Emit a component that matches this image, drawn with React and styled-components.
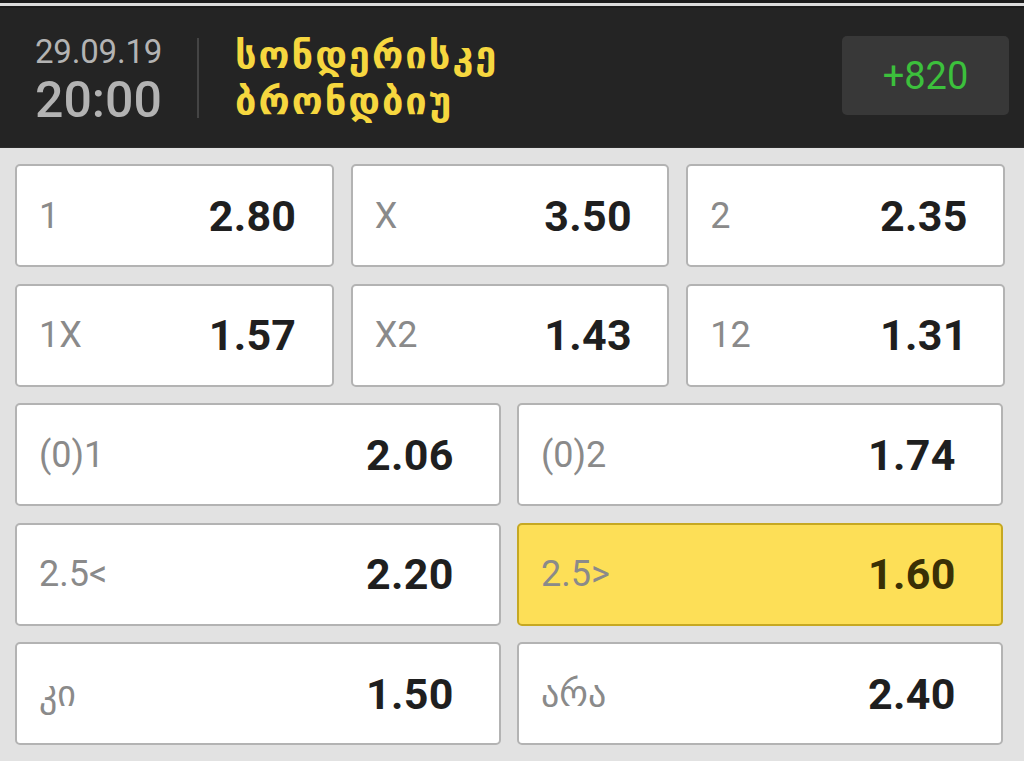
import React from 'react';
import styled, { createGlobalStyle } from 'styled-components';

const GlobalStyle = createGlobalStyle`
  html, body {
    margin: 0;
    padding: 0;
    background: #e2e2e2;
  }
  body {
    font-family: Roboto, "DejaVu Sans", sans-serif;
  }
`;

const Page = styled.div`
  width: 1024px;
  height: 761px;
  overflow: hidden;
  background: #e2e2e2;
`;

const TopEdge = styled.div`
  height: 8px;
  background: #1c1c1c;
  display: flex;
  flex-direction: column;
  justify-content: center;

  &::after {
    content: '';
    display: block;
    height: 3px;
    margin-top: 1px;
    background: #dcdcdc;
  }
`;

const Header = styled.header`
  height: 140px;
  background: #242424;
  display: flex;
  align-items: center;
  padding: 0 15px 0 35px;
  border-bottom: 1px solid #2c2c2c;
  box-sizing: border-box;
`;

const When = styled.div`
  display: flex;
  flex-direction: column;
  color: #b3b3b3;
  width: 162px;
  margin-top: 6px;
`;

const DateText = styled.div`
  font-size: 33px;
  line-height: 30px;
  letter-spacing: -0.2px;
`;

const TimeText = styled.div`
  font-size: 50px;
  line-height: 50px;
  margin-top: 8px;
  font-weight: 500;
`;

const Divider = styled.div`
  width: 2px;
  height: 80px;
  background: #444;
  margin: 0 36px 0 0;
`;

const Teams = styled.div`
  flex: 1;
  color: #f6d73f;
  font-family: "DejaVu Sans", sans-serif;
  font-weight: bold;
  font-size: 38px;
  line-height: 46px;
  letter-spacing: 2px;
`;

const Badge = styled.div`
  width: 167px;
  height: 79px;
  margin-top: -4px;
  border-radius: 5px;
  background: #383838;
  color: #3cc03c;
  font-size: 38px;
  display: flex;
  align-items: center;
  justify-content: center;
`;

const Board = styled.div`
  display: flex;
  flex-direction: column;
  gap: 16.5px;
  padding: 16px 19px 0 15px;
`;

const Row = styled.div`
  display: grid;
  grid-template-columns: repeat(${({ $cols }) => $cols}, 1fr);
  gap: ${({ $cols }) => ($cols === 3 ? 17 : 16)}px;
  padding-right: ${({ $cols }) => ($cols === 3 ? 0 : 2)}px;
`;

const Cell = styled.div`
  height: 103px;
  box-sizing: border-box;
  display: flex;
  align-items: center;
  padding-left: 22px;
  border-radius: 5px;
  border: 2px solid ${({ $active }) => ($active ? '#c6a822' : '#b3b3b3')};
  background: ${({ $active }) => ($active ? '#fddf57' : '#ffffff')};
`;

const Label = styled.span`
  flex: 1;
  color: #8a8a8a;
  font-size: 36px;
  font-family: Roboto, "DejaVu Sans", sans-serif;
`;

const Odd = styled.span`
  width: ${({ $wide }) => ($wide ? 133 : 123)}px;
  color: ${({ $active }) => ($active ? '#3a3005' : '#1f1f1f')};
  font-size: 43px;
  font-weight: 700;
  letter-spacing: 0.3px;
`;

const rows = [
  [
    ['1', '2.80'],
    ['X', '3.50'],
    ['2', '2.35'],
  ],
  [
    ['1X', '1.57'],
    ['X2', '1.43'],
    ['12', '1.31'],
  ],
  [
    ['(0)1', '2.06'],
    ['(0)2', '1.74'],
  ],
  [
    ['2.5<', '2.20'],
    ['2.5>', '1.60', true],
  ],
  [
    ['კი', '1.50'],
    ['არა', '2.40'],
  ],
];

export default function App() {
  return (
    <Page>
      <GlobalStyle />
      <TopEdge />
      <Header>
        <When>
          <DateText>29.09.19</DateText>
          <TimeText>20:00</TimeText>
        </When>
        <Divider />
        <Teams>
          <div>სონდერისკე</div>
          <div>ბრონდბიუ</div>
        </Teams>
        <Badge>+820</Badge>
      </Header>
      <Board>
        {rows.map((row, i) => (
          <Row key={i} $cols={row.length}>
            {row.map(([label, odd, active]) => (
              <Cell key={label} $active={active}>
                <Label>{label}</Label>
                <Odd $wide={row.length === 2} $active={active}>
                  {odd}
                </Odd>
              </Cell>
            ))}
          </Row>
        ))}
      </Board>
    </Page>
  );
}
